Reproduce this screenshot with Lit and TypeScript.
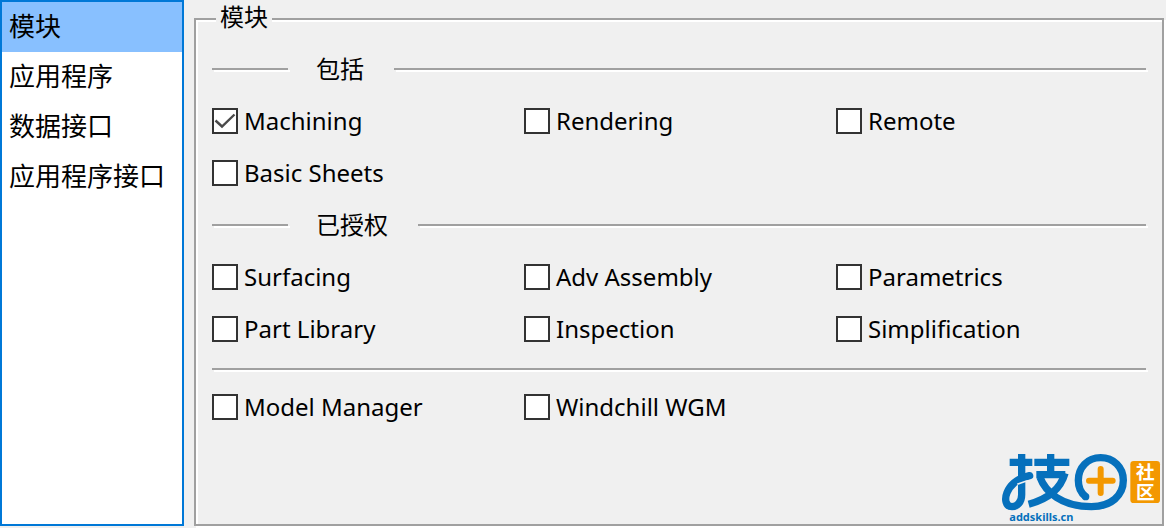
import { LitElement, html, css, svg } from "lit";
import { customElement, state } from "lit/decorators.js";
import { classMap } from "lit/directives/class-map.js";

interface Option {
  id: string;
  label: string;
  checked?: boolean;
}

interface Section {
  title?: string;
  options: Option[];
}

const PAGES = ["模块", "应用程序", "数据接口", "应用程序接口"];

const SECTIONS: Section[] = [
  {
    title: "包括",
    options: [
      { id: "machining", label: "Machining", checked: true },
      { id: "rendering", label: "Rendering" },
      { id: "remote", label: "Remote" },
      { id: "basic-sheets", label: "Basic Sheets" },
    ],
  },
  {
    title: "已授权",
    options: [
      { id: "surfacing", label: "Surfacing" },
      { id: "adv-assembly", label: "Adv Assembly" },
      { id: "parametrics", label: "Parametrics" },
      { id: "part-library", label: "Part Library" },
      { id: "inspection", label: "Inspection" },
      { id: "simplification", label: "Simplification" },
    ],
  },
  {
    options: [
      { id: "model-manager", label: "Model Manager" },
      { id: "windchill-wgm", label: "Windchill WGM" },
    ],
  },
];

@customElement("check-option")
class CheckOption extends LitElement {
  static properties = {
    label: { type: String },
    checked: { type: Boolean },
  };

  declare label: string;
  declare checked: boolean;

  static styles = css`
    :host {
      display: flex;
      align-items: center;
      height: 52px;
    }
    .option {
      display: flex;
      align-items: center;
      gap: 6px;
      white-space: nowrap;
    }
    .tick {
      display: grid;
      flex: none;
      width: 26px;
      height: 26px;
    }
    .box {
      grid-area: 1 / 1;
      appearance: none;
      box-sizing: border-box;
      width: 26px;
      height: 26px;
      margin: 0;
      border: 2px solid #333;
      background: #fff;
    }
    .mark {
      grid-area: 1 / 1;
      width: 26px;
      height: 26px;
      fill: none;
      stroke: #4a4a4a;
      stroke-width: 2.4;
      pointer-events: none;
      visibility: hidden;
      z-index: 1;
    }
    .box:checked + .mark {
      visibility: visible;
    }
  `;

  render() {
    return html`
      <label class="option">
        <span class="tick">
          <input class="box" type="checkbox" .checked=${this.checked} />
          <svg class="mark" viewBox="0 0 26 26" aria-hidden="true">
            <path d="M3.5 12.5L10 18.5L22.5 6.5" />
          </svg>
        </span>
        <span>${this.label}</span>
      </label>
    `;
  }
}

@customElement("site-logo")
class SiteLogo extends LitElement {
  static styles = css`
    :host {
      display: block;
    }
    .logo {
      display: block;
      width: 162px;
      height: 74px;
    }
    .ink {
      fill: none;
      stroke: #0670bc;
      stroke-width: 22;
    }
    .round {
      stroke-linecap: round;
    }
    .gap {
      fill: none;
      stroke: #f0f0f0;
      stroke-width: 5;
    }
    .plus {
      fill: none;
      stroke: #f39800;
      stroke-width: 18;
      stroke-linecap: round;
    }
    .badge {
      fill: #f39800;
    }
    .badge-text {
      fill: #fff;
      font: 700 56px "Noto Sans CJK SC", sans-serif;
      text-anchor: middle;
    }
    .site {
      fill: #0670bc;
      font: 700 33px "Noto Sans", sans-serif;
    }
  `;

  render() {
    return html`
      <svg class="logo" viewBox="30 36 486 222" role="img" aria-label="addskills.cn">
        ${svg`
          <path class="ink" d="M59 67H127M133 67H238M139 104H226M182 42V104" />
          <path class="ink" d="M95 42V164C95 187 81 200 66 200C47 200 43 178 51 158C60 135 82 118 102 112" />
          <path class="ink round" d="M100 112L119 107" />
          <path class="gap" d="M82 133C98 126 112 122 128 120" />
          <path class="ink" d="M225 100C213 143 179 176 116 193" />
          <path class="ink" d="M150 112C166 156 215 200 304 200C364 200 400 166 400 121C400 80 369 53 332 53C292 53 265 83 265 121C265 143 273 159 286 169" />
          <circle cx="287" cy="170" r="11" fill="#0670bc" />
          <path class="plus" d="M297 122H368M332 87V159" />
          <rect class="badge" x="421" y="63" width="89" height="126" rx="10" />
          <text class="badge-text">
            <tspan x="466" y="117">社</tspan><tspan x="466" y="178">区</tspan>
          </text>
          <text class="site" x="58" y="243">addskills.cn</text>
        `}
      </svg>
    `;
  }
}

@customElement("app-root")
class AppRoot extends LitElement {
  @state() private current = 0;

  static styles = css`
    :host {
      display: grid;
      grid-template-columns: 184px minmax(0, 1fr);
      gap: 10px;
      position: relative;
      box-sizing: border-box;
      min-height: 100vh;
      padding: 0 2px 2px 0;
      background: #f0f0f0;
      color: #000;
      font-family: "Noto Sans", "Noto Sans CJK SC", sans-serif;
      font-size: 24px;
      line-height: 28px;
    }
    .pages {
      display: flex;
      flex-direction: column;
      border: 2px solid #0078d7;
      background: #fff;
    }
    .page {
      height: 50px;
      padding: 0 7px 4px;
      border: 0;
      background: none;
      color: inherit;
      font-family: "Noto Sans CJK SC", sans-serif;
      font-size: 26px;
      line-height: 46px;
      text-align: left;
      white-space: nowrap;
    }
    .page.selected {
      background: #88c0ff;
    }
    .group {
      min-width: 0;
      margin: 3px 0 0;
      padding: 8px 14px 16px 16px;
      border: 2px solid #a0a0a0;
      box-shadow: 2px 2px 0 #fff, inset 2px 2px 0 #fff;
    }
    .legend {
      margin-left: 4px;
      padding: 0 4px 4px;
      background: #f0f0f0;
    }
    .heading {
      display: flex;
      align-items: center;
      height: 52px;
      margin: 0;
      font: inherit;
    }
    .title {
      margin: 0 30px 0 28px;
    }
    .rule {
      height: 2px;
      margin-right: 2px;
      background: #a0a0a0;
      box-shadow: 2px 2px 0 #fff;
    }
    .lead {
      width: 76px;
      margin-right: 0;
    }
    .rest {
      flex: 1;
    }
    .divider {
      margin-top: 13px;
      margin-bottom: 11px;
    }
    .options {
      display: grid;
      grid-template-columns: repeat(3, minmax(0, 1fr));
    }
    .logo {
      position: absolute;
      right: 4px;
      bottom: 2px;
    }
  `;

  private renderSection(section: Section) {
    return html`
      ${section.title
        ? html`<h2 class="heading">
            <span class="rule lead"></span>
            <span class="title">${section.title}</span>
            <span class="rule rest"></span>
          </h2>`
        : html`<div class="rule divider" role="separator"></div>`}
      <div class="options">
        ${section.options.map(
          (o) => html`<check-option .label=${o.label} .checked=${!!o.checked}></check-option>`
        )}
      </div>
    `;
  }

  render() {
    return html`
      <nav class="pages">
        ${PAGES.map(
          (name, i) => html`<button
            type="button"
            class=${classMap({ page: true, selected: i === this.current })}
            aria-current=${i === this.current ? "page" : "false"}
            @click=${() => (this.current = i)}
          >${name}</button>`
        )}
      </nav>
      <fieldset class="group">
        <legend class="legend">模块</legend>
        ${SECTIONS.map((s) => this.renderSection(s))}
      </fieldset>
      <site-logo class="logo"></site-logo>
    `;
  }
}
